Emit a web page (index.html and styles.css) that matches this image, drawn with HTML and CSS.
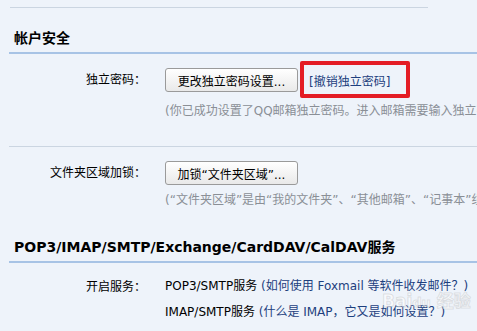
FILE: index.html
```html
<!DOCTYPE html>
<html lang="zh-CN">
<head>
    <meta charset="UTF-8">
    <title>设置 - 帐户</title>
    <link rel="stylesheet" href="styles.css">
</head>
<body>
    <div class="page">
        <div class="top-line"></div>

        <h2 class="section-title">帐户安全</h2>

        <div class="row row-first">
            <div class="label">独立密码：</div>
            <div class="field">
                <button class="btn">更改独立密码设置...</button>
                <a class="link cancel-link" href="#">[撤销独立密码]</a>
            </div>
        </div>
        <div class="note note-first">(你已成功设置了QQ邮箱独立密码。进入邮箱需要输入独立密码，才能查看信件)</div>

        <div class="divider"></div>

        <div class="row row-second">
            <div class="label">文件夹区域加锁：</div>
            <div class="field">
                <button class="btn">加锁“文件夹区域”...</button>
            </div>
        </div>
        <div class="note note-second">(“文件夹区域”是由“我的文件夹”、“其他邮箱”、“记事本”组成)</div>

        <h2 class="section-title section-pop">POP3/IMAP/SMTP/Exchange/CardDAV/CalDAV服务</h2>

        <div class="row row-services">
            <div class="label label-services">开启服务：</div>
            <div class="services">
                <div class="service">POP3/SMTP服务 <a class="link" href="#">(如何使用 Foxmail 等软件收发邮件？)</a></div>
                <div class="service">IMAP/SMTP服务 <a class="link" href="#">(什么是 IMAP，它又是如何设置？)</a></div>
                <div class="service">Exchange服务 <a class="link" href="#">(什么是 Exchange，它又是如何设置？)</a></div>
            </div>
        </div>

        <!-- 截图上的红框标注 -->
        <div class="highlight"></div>
        <div class="watermark">Bai<span>du</span> 经验</div>
    </div>
</body>
</html>
```

FILE: styles.css
```css
html, body {
    margin: 0;
    padding: 0;
    overflow: hidden;
}
body {
    font-family: "DejaVu Sans", "Noto Sans CJK SC", sans-serif;
    font-size: 12px;
    color: #000;
    background-color: #eef3fa;
}
.page {
    position: relative;
    padding-left: 9px;
    height: 331px;
    white-space: nowrap;
}
.top-line {
    margin-left: 1px;
    padding-top: 7px;
    width: 418px;
    border-bottom: 1px solid #cbd5e1;
}
.section-title {
    margin: 20px 0 0 0;
    padding: 0 0 4px 5px;
    font-size: 14px;
    font-weight: bold;
    line-height: 20px;
    border-bottom: 2px solid #a7c3e5;
}
.section-pop {
    margin-top: 28px;
}
.row {
    display: flex;
    align-items: center;
}
.row-first {
    margin-top: 14px;
}
.row-second {
    margin-top: 14px;
}
.label {
    width: 137px;
    text-align: right;
    line-height: 24px;
    flex-shrink: 0;
}
.field {
    margin-left: 19px;
    display: flex;
    align-items: center;
}
.btn {
    font-family: "DejaVu Sans", "Noto Sans CJK SC", sans-serif;
    font-size: 12px;
    color: #000;
    height: 24px;
    width: 133px;
    padding: 0;
    border: 1px solid #9a9a9a;
    border-radius: 3px;
    background: linear-gradient(#ffffff, #e9e9e9);
}
.link {
    color: #1d3f7e;
    text-decoration: none;
}
.cancel-link {
    margin-left: 11px;
}
.note {
    margin-left: 156px;
    color: #8a8f96;
    line-height: 18px;
}
.note-first {
    margin-top: 10px;
}
.note-second {
    margin-top: 6px;
}
.divider {
    margin-top: 26px;
    border-top: 1px solid #cbd5e1;
}
.row-services {
    align-items: flex-start;
    margin-top: 10px;
}
.label-services {
    padding-top: 5px;
    line-height: 18px;
}
.services {
    margin-left: 19px;
}
.service {
    line-height: 26px;
}
.highlight {
    position: absolute;
    left: 300px;
    top: 61px;
    width: 102px;
    height: 29px;
    border: 4px solid #e41d25;
    border-radius: 2px;
}
.watermark {
    position: absolute;
    left: 382px;
    top: 287px;
    font-size: 17px;
    font-weight: bold;
    color: rgba(255, 255, 255, 0.55);
    -webkit-text-stroke: 1px rgba(150, 150, 150, 0.25);
}
.watermark span {
    font-size: 13px;
}
```
